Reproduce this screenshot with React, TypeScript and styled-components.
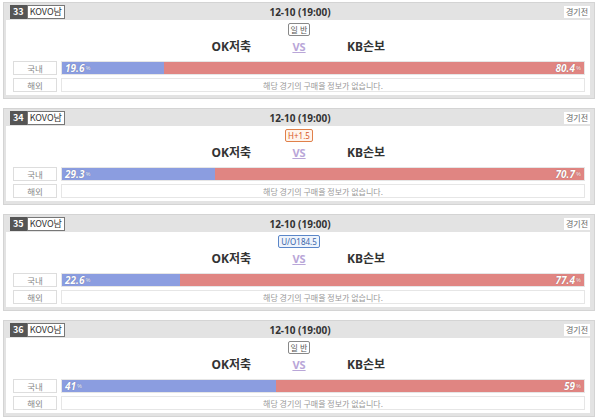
import React, { FC } from "react"
import styled, { createGlobalStyle } from "styled-components"

const GlobalStyle = createGlobalStyle`
  *, *::before, *::after {
    box-sizing: border-box;
  }
  body {
    margin: 0;
    background: #fff;
    font-family: "Noto Sans CJK KR", "Noto Sans", sans-serif;
  }
`

const List = styled.div`
  display: flex;
  flex-direction: column;
  gap: 9px;
  padding: 2px 5px 0 3px;
`

const Card = styled.div`
  background: #e3e3e3;
  border: 1px solid #d4d4d4;
  padding: 0 4px 3px 2px;
`

const Header = styled.div`
  display: grid;
  grid-template-columns: 1fr auto 1fr;
  align-items: center;
  height: 17px;
  padding: 0 0 0 4px;
`

const Tags = styled.div`
  display: flex;
  align-items: center;
`

const No = styled.span`
  background: #555;
  color: #fff;
  font-size: 9px;
  font-weight: 700;
  line-height: 12px;
  padding: 0 2px;
  border: 1px solid #555;
`

const League = styled.span`
  background: #fff;
  color: #333;
  font-size: 9px;
  line-height: 12px;
  padding: 0 2px;
  border: 1px solid #777;
`

const Date = styled.div`
  font-family: "Noto Sans", sans-serif;
  font-size: 10px;
  font-weight: 700;
  color: #333;
`

const Status = styled.span`
  justify-self: end;
  background: #fff;
  color: #666;
  font-size: 8px;
  line-height: 12px;
  padding: 0 2px;
`

const Body = styled.div`
  background: #fff;
  padding: 2px 5px 3px 7px;
  display: flex;
  flex-direction: column;
`

const Center = styled.div`
  display: flex;
  justify-content: center;
  height: 14px;
  align-items: center;
`

const Handicap = styled.span<{ $tone: "plain" | "orange" | "blue" }>`
  font-family: "Noto Sans", "Noto Sans CJK KR", sans-serif;
  font-size: 8px;
  line-height: 11px;
  padding: 0 2px;
  border-radius: 2px;
  background: ${({ $tone }) =>
    $tone === "orange" ? "#fff4ec" : $tone === "blue" ? "#eef4fc" : "#fff"};
  color: ${({ $tone }) =>
    $tone === "orange" ? "#d9581f" : $tone === "blue" ? "#3a63a8" : "#555"};
  border: 1px solid
    ${({ $tone }) =>
      $tone === "orange" ? "#e0804a" : $tone === "blue" ? "#5b86c8" : "#888"};
`

const Teams = styled.div`
  display: grid;
  grid-template-columns: 1fr 56px 1fr;
  align-items: center;
  height: 20px;
  margin-bottom: 5px;
`

const Team = styled.div<{ $side: "home" | "away" }>`
  font-family: "Noto Sans", "Noto Sans CJK KR", sans-serif;
  font-size: 12px;
  font-weight: 700;
  color: #333;
  text-align: ${({ $side }) => ($side === "home" ? "right" : "left")};
  padding: ${({ $side }) => ($side === "home" ? "0 20px 0 0" : "0 0 0 20px")};
`

const Vs = styled.div`
  font-family: "Noto Sans", sans-serif;
  text-align: center;
  font-size: 11px;
  font-weight: 700;
  color: #b9a6d8;
  text-decoration: underline;
`

const Row = styled.div`
  display: flex;
  gap: 4px;
  height: 14px;
  & + & {
    margin-top: 3px;
  }
`

const Label = styled.div`
  width: 44px;
  flex-shrink: 0;
  border: 1px solid #ddd;
  color: #888;
  font-size: 8.5px;
  display: flex;
  align-items: center;
  justify-content: center;
`

const Bar = styled.div`
  flex: 1;
  display: flex;
  border: 1px solid #e6e6e6;
`

const Fill = styled.div<{ $side: "home" | "away" }>`
  background: ${({ $side }) => ($side === "home" ? "#8b9de0" : "#e08582")};
  display: flex;
  align-items: center;
  justify-content: ${({ $side }) => ($side === "home" ? "flex-start" : "flex-end")};
  padding: 0 3px;
  color: #fff;
  font-family: "Noto Sans", sans-serif;
  font-style: italic;
  font-weight: 700;
  font-size: 10px;
  text-shadow: 0 0 1px rgba(0, 0, 0, 0.35);
  small {
    font-size: 6px;
    font-weight: 400;
    font-style: normal;
    margin-left: 1px;
    opacity: 0.8;
  }
`

const Empty = styled.div`
  flex: 1;
  border: 1px solid #e6e6e6;
  color: #999;
  font-size: 8px;
  display: flex;
  align-items: center;
  justify-content: center;
`

interface Game {
  no: number
  tag: string
  tone: "plain" | "orange" | "blue"
  home: number
  away: number
}

const games: Game[] = [
  { no: 33, tag: "일 반", tone: "plain", home: 19.6, away: 80.4 },
  { no: 34, tag: "H+1.5", tone: "orange", home: 29.3, away: 70.7 },
  { no: 35, tag: "U/O184.5", tone: "blue", home: 22.6, away: 77.4 },
  { no: 36, tag: "일 반", tone: "plain", home: 41, away: 59 },
]

const GameCard: FC<{ game: Game }> = ({ game }) => (
  <Card>
    <Header>
      <Tags>
        <No>{game.no}</No>
        <League>KOVO남</League>
      </Tags>
      <Date>12-10 (19:00)</Date>
      <Status>경기전</Status>
    </Header>
    <Body>
      <Center>
        <Handicap $tone={game.tone}>{game.tag}</Handicap>
      </Center>
      <Teams>
        <Team $side="home">OK저축</Team>
        <Vs>VS</Vs>
        <Team $side="away">KB손보</Team>
      </Teams>
      <Row>
        <Label>국내</Label>
        <Bar>
          <Fill $side="home" style={{ width: `${game.home}%` }}>
            {game.home}
            <small>%</small>
          </Fill>
          <Fill $side="away" style={{ width: `${game.away}%` }}>
            {game.away}
            <small>%</small>
          </Fill>
        </Bar>
      </Row>
      <Row>
        <Label>해외</Label>
        <Empty>해당 경기의 구매율 정보가 없습니다.</Empty>
      </Row>
    </Body>
  </Card>
)

const App: FC = () => (
  <>
    <GlobalStyle />
    <List>
      {games.map(g => (
        <GameCard key={g.no} game={g} />
      ))}
    </List>
  </>
)

export default App
